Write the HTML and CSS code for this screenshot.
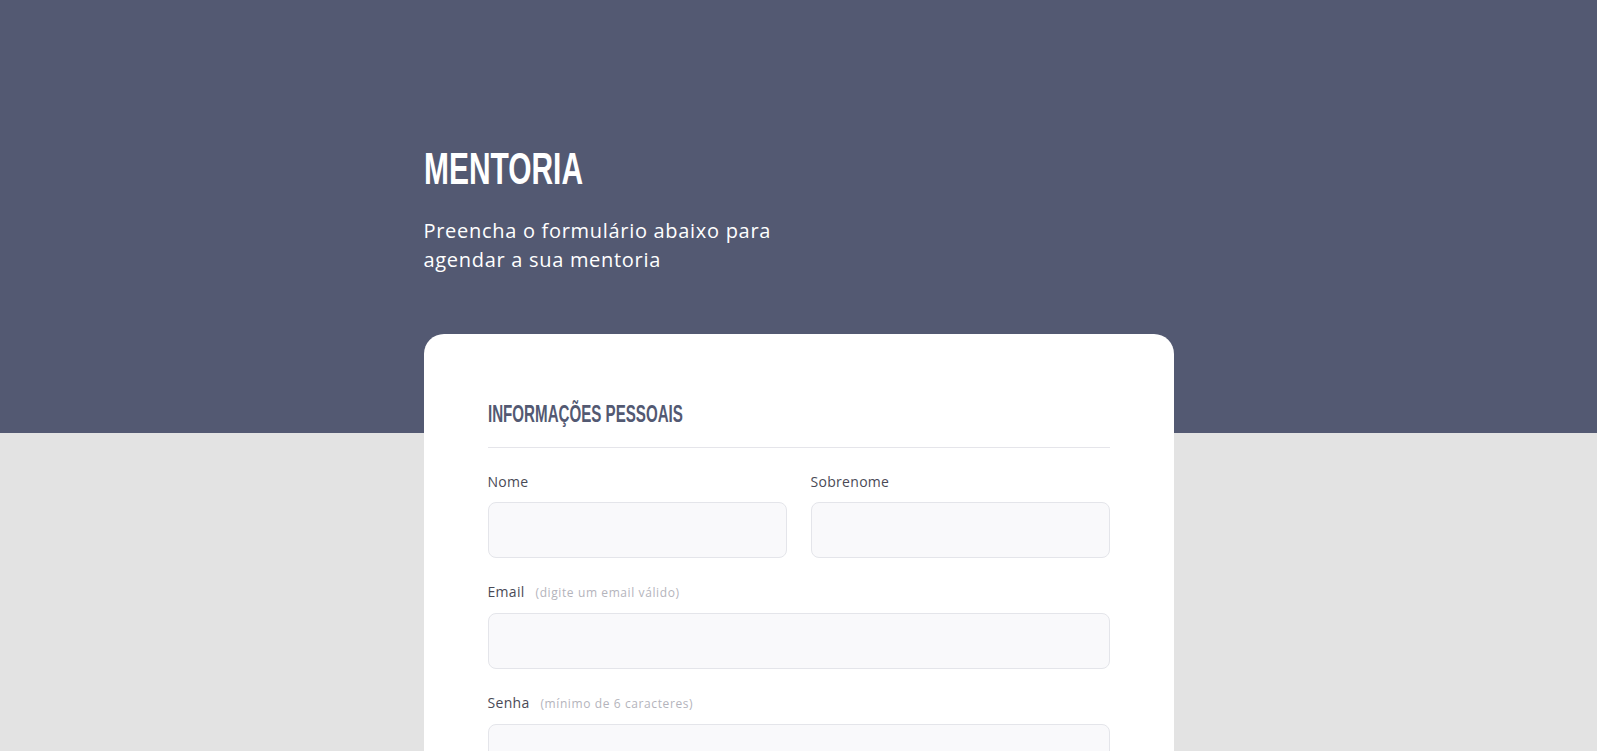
FILE: index.html
```html
<!DOCTYPE html>
<html lang="pt-BR">
<head>
<meta charset="utf-8">
<title>Mentoria</title>
<link rel="stylesheet" href="styles.css">
</head>
<body>
<main class="page">
  <header class="hero">
    <h1 class="hero-title"><span class="condensed">Mentoria</span></h1>
    <p class="hero-text">Preencha o formulário abaixo para agendar a sua mentoria</p>
  </header>

  <form class="card">
    <h2 class="section-title"><span class="condensed">Informações pessoais</span></h2>

    <div class="row two">
      <div class="field">
        <label class="label" for="nome">Nome</label>
        <input class="input" id="nome" type="text">
      </div>
      <div class="field">
        <label class="label" for="sobrenome">Sobrenome</label>
        <input class="input" id="sobrenome" type="text">
      </div>
    </div>

    <div class="field">
      <label class="label" for="email">Email <span class="hint">(digite um email válido)</span></label>
      <input class="input" id="email" type="email">
    </div>

    <div class="field">
      <label class="label" for="senha">Senha <span class="hint">(mínimo de 6 caracteres)</span></label>
      <input class="input" id="senha" type="password">
    </div>

    <div class="field">
      <label class="label" for="senha2">Confirmar senha</label>
      <input class="input" id="senha2" type="password">
    </div>

    <h2 class="section-title spaced"><span class="condensed">Informações da mentoria</span></h2>

    <div class="field">
      <label class="label" for="tema">Tema da mentoria</label>
      <input class="input" id="tema" type="text">
    </div>

    <div class="row two">
      <div class="field">
        <label class="label" for="data">Data</label>
        <input class="input" id="data" type="text">
      </div>
      <div class="field">
        <label class="label" for="hora">Horário</label>
        <input class="input" id="hora" type="text">
      </div>
    </div>

    <div class="field">
      <label class="label" for="obs">Observações</label>
      <textarea class="input textarea" id="obs"></textarea>
    </div>

    <button class="submit" type="button">Enviar</button>
  </form>
</main>
</body>
</html>
```

FILE: styles.css
```css
html, body {
  margin: 0;
  padding: 0;
}

body {
  font-family: "Open Sans", "Noto Sans", sans-serif;
  background: linear-gradient(to bottom, #535972 0, #535972 433px, #e3e3e3 433px, #e3e3e3 100%);
  min-height: 100vh;
}

.page {
  width: 750px;
  margin: 0 auto;
  padding: 145px 0 120px;
}

.condensed {
  display: inline-block;
  font-family: "Liberation Sans", "Arial", sans-serif;
  font-weight: 700;
  text-transform: uppercase;
  white-space: nowrap;
  transform-origin: left center;
}

.hero-title {
  margin: 0 0 25px;
  font-size: 44px;
  line-height: 44px;
  color: #ffffff;
  font-weight: 700;
}

.hero-title .condensed {
  transform: scaleX(0.68);
}

.hero-text {
  margin: 0;
  max-width: 380px;
  font-size: 20px;
  line-height: 29px;
  letter-spacing: 0.7px;
  color: #ffffff;
}

.card {
  margin-top: 60px;
  background: #ffffff;
  border-radius: 20px;
  padding: 61px 64px 64px;
  display: flex;
  flex-direction: column;
  gap: 24px;
}

.section-title {
  margin: 0;
  padding-bottom: 15px;
  border-bottom: 1px solid #e5e5ea;
  font-size: 24px;
  line-height: 36px;
  color: #535972;
  font-weight: 700;
}

.section-title .condensed {
  transform: scaleX(0.63);
}

.section-title.spaced {
  margin-top: 24px;
}

.row.two {
  display: grid;
  grid-template-columns: 1fr 1fr;
  gap: 24px;
}

.field {
  display: flex;
  flex-direction: column;
  gap: 10px;
}

.label {
  font-size: 14px;
  line-height: 20px;
  letter-spacing: 0.3px;
  color: #4a4a56;
}

.hint {
  margin-left: 7px;
  font-size: 12px;
  letter-spacing: 0.6px;
  color: #b4b4bc;
}

.input {
  box-sizing: border-box;
  height: 56px;
  width: 100%;
  margin: 0;
  background: #f9f9fb;
  border: 1px solid #e4e5ea;
  border-radius: 8px;
  font-family: inherit;
  font-size: 14px;
  padding: 0 16px;
  outline: none;
}

.textarea {
  height: 120px;
  resize: none;
  padding: 16px;
}

.submit {
  height: 56px;
  border: none;
  border-radius: 8px;
  background: #535972;
  color: #ffffff;
  font-family: inherit;
  font-size: 16px;
  font-weight: 600;
}
```
